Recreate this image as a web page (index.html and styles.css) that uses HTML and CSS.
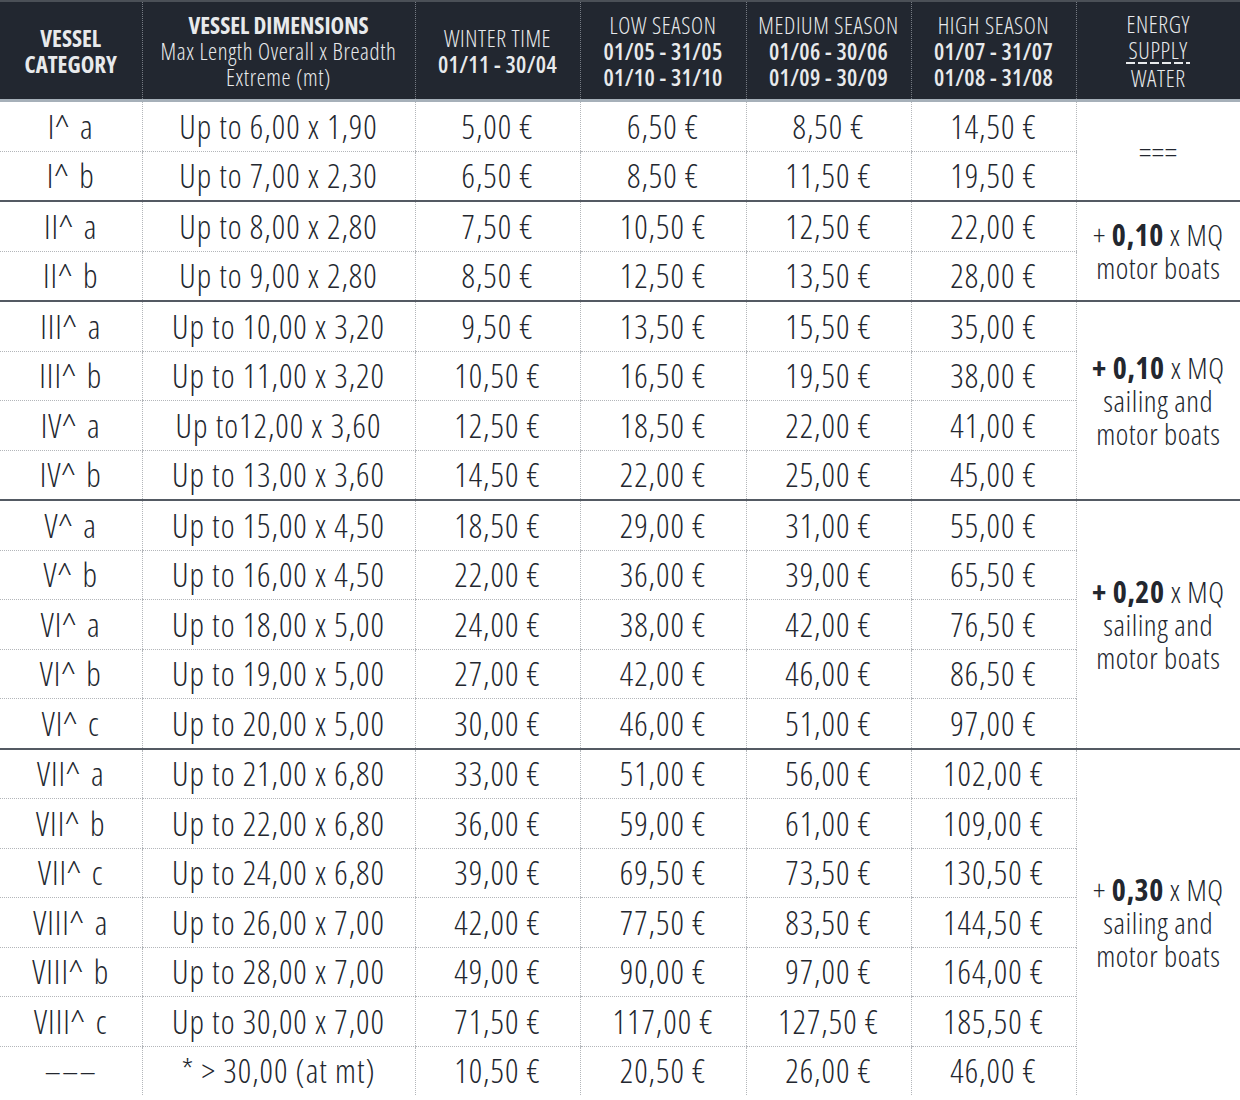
FILE: index.html
```html
<!DOCTYPE html>
<html lang="en">
<head>
<meta charset="utf-8">
<title>Mooring rates</title>
<link rel="stylesheet" href="styles.css">
</head>
<body>
<table class="rates">
  <colgroup>
    <col class="w-cat"><col class="w-dim"><col class="w-p1"><col class="w-p2"><col class="w-p3"><col class="w-p4"><col class="w-en">
  </colgroup>
  <thead>
    <tr>
      <th><b>VESSEL</b><br><b>CATEGORY</b></th>
      <th><b>VESSEL DIMENSIONS</b><br>Max Length Overall x Breadth<br>Extreme (mt)</th>
      <th>WINTER TIME<br><b class="date">01/11 - 30/04</b></th>
      <th>LOW SEASON<br><b class="date">01/05 - 31/05</b><br><b class="date">01/10 - 31/10</b></th>
      <th>MEDIUM SEASON<br><b class="date">01/06 - 30/06</b><br><b class="date">01/09 - 30/09</b></th>
      <th>HIGH SEASON<br><b class="date">01/07 - 31/07</b><br><b class="date">01/08 - 31/08</b></th>
      <th><span class="energy-head">ENERGY<br>SUPPLY<span class="frac"></span>WATER</span></th>
    </tr>
  </thead>
  <tbody>
    <tr><td class="cat">I^ a</td><td>Up to 6,00 x 1,90</td><td>5,00 €</td><td>6,50 €</td><td>8,50 €</td><td>14,50 €</td><td class="energy" rowspan="2">===</td></tr>
    <tr class="group-end"><td class="cat">I^ b</td><td>Up to 7,00 x 2,30</td><td>6,50 €</td><td>8,50 €</td><td>11,50 €</td><td>19,50 €</td></tr>

    <tr><td class="cat">II^ a</td><td>Up to 8,00 x 2,80</td><td>7,50 €</td><td>10,50 €</td><td>12,50 €</td><td>22,00 €</td><td class="energy" rowspan="2">+ <b>0,10</b> x MQ<br>motor boats</td></tr>
    <tr class="group-end"><td class="cat">II^ b</td><td>Up to 9,00 x 2,80</td><td>8,50 €</td><td>12,50 €</td><td>13,50 €</td><td>28,00 €</td></tr>

    <tr><td class="cat">III^ a</td><td>Up to 10,00 x 3,20</td><td>9,50 €</td><td>13,50 €</td><td>15,50 €</td><td>35,00 €</td><td class="energy" rowspan="4"><b>+ 0,10</b> x MQ<br>sailing and<br>motor boats</td></tr>
    <tr><td class="cat">III^ b</td><td>Up to 11,00 x 3,20</td><td>10,50 €</td><td>16,50 €</td><td>19,50 €</td><td>38,00 €</td></tr>
    <tr><td class="cat">IV^ a</td><td>Up to12,00 x 3,60</td><td>12,50 €</td><td>18,50 €</td><td>22,00 €</td><td>41,00 €</td></tr>
    <tr class="group-end"><td class="cat">IV^ b</td><td>Up to 13,00 x 3,60</td><td>14,50 €</td><td>22,00 €</td><td>25,00 €</td><td>45,00 €</td></tr>

    <tr><td class="cat">V^ a</td><td>Up to 15,00 x 4,50</td><td>18,50 €</td><td>29,00 €</td><td>31,00 €</td><td>55,00 €</td><td class="energy" rowspan="5"><b>+ 0,20</b> x MQ<br>sailing and<br>motor boats</td></tr>
    <tr><td class="cat">V^ b</td><td>Up to 16,00 x 4,50</td><td>22,00 €</td><td>36,00 €</td><td>39,00 €</td><td>65,50 €</td></tr>
    <tr><td class="cat">VI^ a</td><td>Up to 18,00 x 5,00</td><td>24,00 €</td><td>38,00 €</td><td>42,00 €</td><td>76,50 €</td></tr>
    <tr><td class="cat">VI^ b</td><td>Up to 19,00 x 5,00</td><td>27,00 €</td><td>42,00 €</td><td>46,00 €</td><td>86,50 €</td></tr>
    <tr class="group-end"><td class="cat">VI^ c</td><td>Up to 20,00 x 5,00</td><td>30,00 €</td><td>46,00 €</td><td>51,00 €</td><td>97,00 €</td></tr>

    <tr><td class="cat">VII^ a</td><td>Up to 21,00 x 6,80</td><td>33,00 €</td><td>51,00 €</td><td>56,00 €</td><td>102,00 €</td><td class="energy energy-last" rowspan="7">+ <b>0,30</b> x MQ<br>sailing and<br>motor boats</td></tr>
    <tr><td class="cat">VII^ b</td><td>Up to 22,00 x 6,80</td><td>36,00 €</td><td>59,00 €</td><td>61,00 €</td><td>109,00 €</td></tr>
    <tr><td class="cat">VII^ c</td><td>Up to 24,00 x 6,80</td><td>39,00 €</td><td>69,50 €</td><td>73,50 €</td><td>130,50 €</td></tr>
    <tr><td class="cat">VIII^ a</td><td>Up to 26,00 x 7,00</td><td>42,00 €</td><td>77,50 €</td><td>83,50 €</td><td>144,50 €</td></tr>
    <tr><td class="cat">VIII^ b</td><td>Up to 28,00 x 7,00</td><td>49,00 €</td><td>90,00 €</td><td>97,00 €</td><td>164,00 €</td></tr>
    <tr><td class="cat">VIII^ c</td><td>Up to 30,00 x 7,00</td><td>71,50 €</td><td>117,00 €</td><td>127,50 €</td><td>185,50 €</td></tr>
    <tr class="last"><td class="cat">–––</td><td>* &gt; 30,00 (at mt)</td><td>10,50 €</td><td>20,50 €</td><td>26,00 €</td><td>46,00 €</td></tr>
  </tbody>
</table>
</body>
</html>
```
FILE: styles.css
```css
body {
  margin: 0;
  background: #ffffff;
  font-family: "Open Sans", "Noto Sans", "Liberation Sans", sans-serif;
  font-stretch: 75%;
}

.rates {
  width: 1240px;
  border-collapse: collapse;
  table-layout: fixed;
  color: #23272f;
}

.w-cat { width: 142px; }
.w-dim { width: 273px; }
.w-p1 { width: 165px; }
.w-p2 { width: 166px; }
.w-p3 { width: 165px; }
.w-p4 { width: 165px; }
.w-en { width: 164px; }

.rates th {
  height: 97px;
  padding: 0;
  background: #222730;
  color: #e8eaec;
  font-size: 23px;
  font-weight: 300;
  letter-spacing: 0.6px;
  line-height: 26px;
  text-align: center;
  vertical-align: middle;
  white-space: nowrap;
  border-top: 2px solid #4b5057;
  border-bottom: 3px solid #a6b0b9;
  border-left: 1px dotted #767b83;
}

.rates th:first-child { border-left: none; }

.rates th b {
  font-weight: 700;
  letter-spacing: 0;
}
.rates th b.date {
  font-weight: 600;
  letter-spacing: 0.3px;
}

.energy-head {
  display: inline-flex;
  flex-direction: column;
  align-items: center;
  line-height: 26px;
}

.frac {
  display: block;
  width: 64px;
  height: 2px;
  margin: -1px 0 1px;
  background: repeating-linear-gradient(90deg, #e8eaec 0 9px, transparent 9px 12px);
}

.rates td {
  height: 48.5px;
  padding: 0;
  text-align: center;
  vertical-align: middle;
  font-size: 33px;
  font-weight: 300;
  letter-spacing: 1px;
  white-space: nowrap;
  border-bottom: 1px dotted #b3b6ba;
  border-left: 1px dotted #b3b6ba;
}

.rates td:first-child { border-left: none; }

.rates td.cat { word-spacing: 3px; }

.rates tr.group-end td,
.rates td.energy {
  border-bottom: 2px solid #545a63;
}

.rates tr.last td,
.rates td.energy-last { border-bottom: none; }

.rates td.energy {
  font-size: 30px;
  font-weight: 300;
  letter-spacing: 0.5px;
  line-height: 33px;
  white-space: nowrap;
}

.rates td.energy b { font-weight: 700; }
```
